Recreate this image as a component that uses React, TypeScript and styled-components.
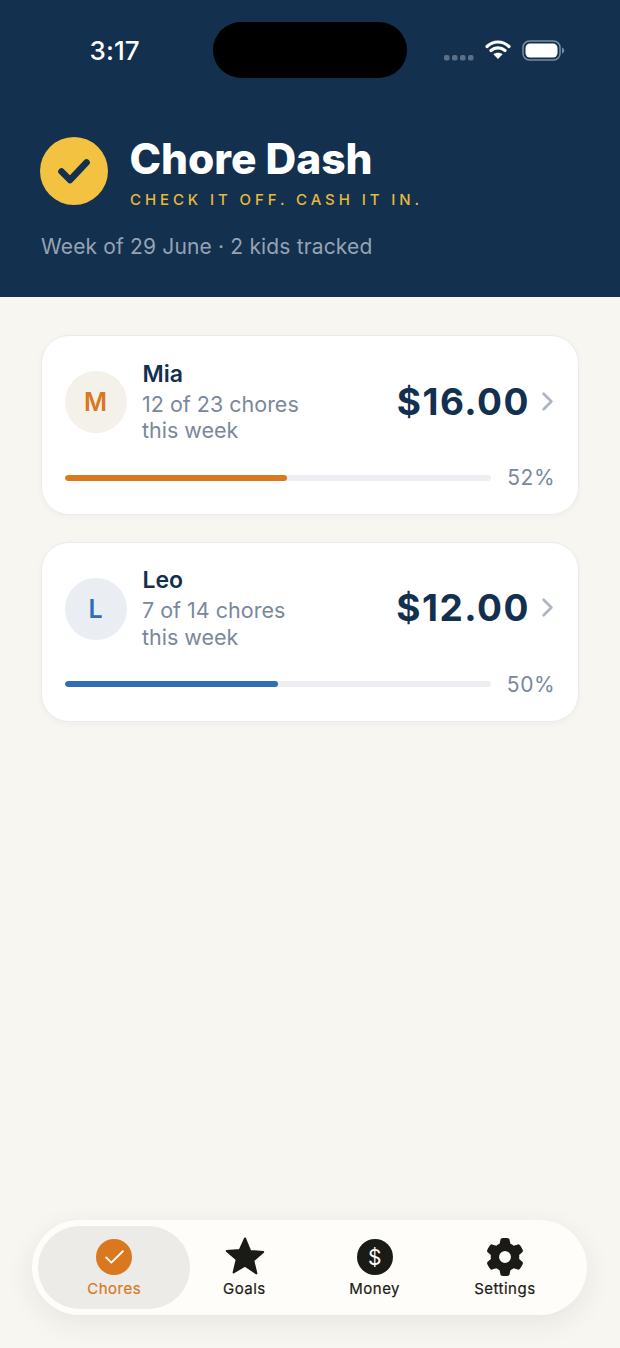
import React from "react";
import styled, { createGlobalStyle } from "styled-components";
import { ChevronRight, Check } from "lucide-react";
import { FaGear } from "react-icons/fa6";

const Global = createGlobalStyle`
  html, body { margin: 0; padding: 0; background: #f8f6f1; }
  * { box-sizing: border-box; }
  body { font-family: Inter, "Liberation Sans", sans-serif; -webkit-font-smoothing: antialiased; }
`;

const Page = styled.div`
  width: 620px; height: 1348px; display: flex; flex-direction: column;
  background: #f8f6f1; overflow: hidden;
`;
const Header = styled.header`
  height: 297px; background: #13304f; padding: 22px 41px 0 40px;
  display: flex; flex-direction: column;
`;
const StatusBar = styled.div`
  height: 56px; display: grid; grid-template-columns: 173px 194px 1fr; align-items: center;
`;
const Time = styled.div`
  color: #fff; font-size: 26px; font-weight: 500; padding-left: 49.5px; letter-spacing: 0.1px; margin-top: 1px;
`;
const Island = styled.div`
  width: 194px; height: 56px; border-radius: 28px; background: #000;
`;
const StatusIcons = styled.div`
  display: flex; align-items: center; padding-left: 37px; gap: 11px;
`;
const Brand = styled.div`
  margin-top: 59px; display: flex; align-items: flex-start; gap: 22px;
`;
const Logo = styled.div`
  width: 68px; height: 68px; border-radius: 50%; display: flex; align-items: center; justify-content: center;
  background: radial-gradient(circle at 50% 40%, #f2c240 74%, #e6b63c 100%);
`;
const BrandText = styled.div` display: flex; flex-direction: column; `;
const Title = styled.h1`
  margin: 0 0 0 -0.5px; color: #fff; font-size: 42.5px; line-height: 44px; font-weight: 800; letter-spacing: -0.05px;
`;
const Tagline = styled.div`
  margin-top: 10px; color: #e8b93a; font-size: 15px; line-height: 18px; font-weight: 500; letter-spacing: 3.9px; white-space: nowrap;
`;
const WeekLine = styled.div`
  margin-top: 25px; color: #96a3b3; font-size: 21px; line-height: 26px; padding-left: 1px; letter-spacing: 0.16px;
`;
const Main = styled.main`
  flex: 1; padding: 38px 41px 0 41px; display: flex; flex-direction: column; gap: 26.5px;
`;
const Card = styled.section`
  height: 180px; background: #fff; border-radius: 28px; border: 1px solid #e9ebee;
  box-shadow: 0 2px 6px rgba(19, 48, 79, 0.04); padding: 23px 23px 0 23px;
`;
const CardTop = styled.div` display: flex; align-items: center; height: 86px; `;
const Avatar = styled.div<{ $bg: string; $fg: string }>`
  width: 62px; height: 62px; border-radius: 50%; flex: none; background: ${(p) => p.$bg}; color: ${(p) => p.$fg};
  display: flex; align-items: center; justify-content: center; font-size: 25px; font-weight: 600; padding-right: 1px;
`;
const Info = styled.div` flex: 1; margin: -2px 0 0 15px; `;
const Name = styled.div` color: #13304f; font-size: 23px; line-height: 30px; font-weight: 600; margin-bottom: 2px; padding-left: 0.5px; `;
const Sub = styled.div` color: #7a889b; font-size: 21.5px; line-height: 26.5px; width: 190px; `;
const Amount = styled.div` color: #13304f; font-size: 37px; font-weight: 700; letter-spacing: 1.5px; margin-top: -2px; `;
const Chev = styled(ChevronRight)` color: #aeb6c0; margin: -2px -8px 0 2px; `;
const ProgressRow = styled.div` display: flex; align-items: center; margin-top: 20px; `;
const Track = styled.div` flex: none; width: 426px; height: 6px; border-radius: 3px; background: #edeef1; overflow: hidden; `;
const Fill = styled.div<{ $c: string }>` height: 100%; border-radius: 3px; background: ${(p) => p.$c}; `;
const Pct = styled.div` flex: 1; text-align: right; color: #7a889b; font-size: 21px; letter-spacing: 0.5px; `;
const TabBar = styled.nav`
  margin: 0 33px 33px 32px; height: 95px; border-radius: 48px; background: #fefdf9; padding: 6px 17px;
  display: grid; grid-template-columns: repeat(4, 1fr); box-shadow: 0 8px 28px rgba(40, 40, 30, 0.08);
`;
const Tab = styled.div<{ $active?: boolean }>`
  display: flex; flex-direction: column; align-items: center; justify-content: flex-start;
  padding-top: 11px; border-radius: 42px; height: 83px;
  margin: ${(p) => (p.$active ? "0 -11px" : "0")};
  background: ${(p) => (p.$active ? "#ecebe7" : "transparent")};
  color: ${(p) => (p.$active ? "#d9781e" : "#1a1a17")};
`;
const TabIcon = styled.div` height: 40px; display: flex; align-items: center; justify-content: center; `;
const TabLabel = styled.div` margin-top: 2px; font-size: 15px; line-height: 20px; font-weight: 400; letter-spacing: 0.5px; -webkit-text-stroke: 0.2px currentColor; `;
const Round = styled.div<{ $bg: string }>`
  width: 36px; height: 36px; border-radius: 50%; background: ${(p) => p.$bg}; color: #fdfcf8;
  display: flex; align-items: center; justify-content: center; font-size: 21px; font-weight: 400;
`;
const StarIcon = styled.svg` margin: -3px 0 0 1px; `;

const kids = [
  { n: "Mia", l: "M", s: "12 of 23 chores", a: "$16.00", p: 52, w: 52.2, c: "#d9781e", bg: "#f4f1ea" },
  { n: "Leo", l: "L", s: "7 of 14 chores", a: "$12.00", p: 50, w: 50, c: "#2f6db5", bg: "#eaeef3" },
];

export default function App() {
  return (
    <Page>
      <Global />
      <Header>
        <StatusBar>
          <Time>3:17</Time>
          <Island />
          <StatusIcons>
            <svg width="30" height="8" viewBox="0 0 30 8" style={{ marginTop: 15 }}>
              {[0, 8, 16, 24].map((x) => <rect key={x} x={x} y="1" width="5.5" height="5.5" rx="1.8" fill="#5c6f85" />)}
            </svg>
            <svg width="26" height="21" viewBox="0 0 26 21" style={{ marginTop: -2 }}>
              <path d="M2 7.5C8.5 1.5 17.5 1.5 24 7.5M6 11.5C10 8 16 8 20 11.5" fill="none" stroke="#fff" strokeWidth="3.2" strokeLinecap="round" />
              <path d="M13 20l-4.6-4.8c2.6-2 6.6-2 9.2 0z" fill="#fff" strokeLinejoin="round" />
            </svg>
            <svg width="43" height="21" viewBox="0 0 43 21">
              <rect x="1" y="1" width="37" height="19" rx="6.5" fill="none" stroke="#7c8ca0" strokeWidth="1.5" />
              <rect x="3.5" y="3.5" width="32" height="14" rx="4.5" fill="#fff" />
              <path d="M40 7.5c1.5.6 2.2 1.6 2.2 3s-.7 2.4-2.2 3z" fill="#7c8ca0" />
            </svg>
          </StatusIcons>
        </StatusBar>
        <Brand>
          <Logo>
            <svg width="34" height="28" viewBox="0 0 34 28">
              <path d="M4.5 14.5l8.5 8.5L29.5 5.5" fill="none" stroke="#13304f" strokeWidth="6.6" strokeLinecap="round" strokeLinejoin="round" />
            </svg>
          </Logo>
          <BrandText>
            <Title>Chore Dash</Title>
            <Tagline>CHECK IT OFF. CASH IT IN.</Tagline>
          </BrandText>
        </Brand>
        <WeekLine>Week of 29 June · 2 kids tracked</WeekLine>
      </Header>
      <Main>
        {kids.map((k) => (
          <Card key={k.n}>
            <CardTop>
              <Avatar $bg={k.bg} $fg={k.c}>{k.l}</Avatar>
              <Info>
                <Name>{k.n}</Name>
                <Sub>{k.s}<br />this week</Sub>
              </Info>
              <Amount>{k.a}</Amount>
              <Chev size={31} strokeWidth={2.1} />
            </CardTop>
            <ProgressRow>
              <Track><Fill $c={k.c} style={{ width: `${k.w}%` }} /></Track>
              <Pct>{k.p}%</Pct>
            </ProgressRow>
          </Card>
        ))}
      </Main>
      <TabBar>
        <Tab $active>
          <TabIcon><Round $bg="#d9781e"><Check size={25} strokeWidth={1.8} /></Round></TabIcon>
          <TabLabel>Chores</TabLabel>
        </Tab>
        <Tab>
          <TabIcon>
            <StarIcon width="40" height="39" viewBox="0 0 40 39">
              <path d="M20 2.5l5.2 12.4 13 1-9.9 8.6 3.1 12.9L20 29.6 8.6 36.4l3.1-12.9-9.9-8.6 13-1z" fill="#1a1a17" stroke="#1a1a17" strokeWidth="2" strokeLinejoin="round" />
            </StarIcon>
          </TabIcon>
          <TabLabel>Goals</TabLabel>
        </Tab>
        <Tab>
          <TabIcon><Round $bg="#1a1a17">$</Round></TabIcon>
          <TabLabel>Money</TabLabel>
        </Tab>
        <Tab>
          <TabIcon><FaGear size={38} /></TabIcon>
          <TabLabel>Settings</TabLabel>
        </Tab>
      </TabBar>
    </Page>
  );
}
